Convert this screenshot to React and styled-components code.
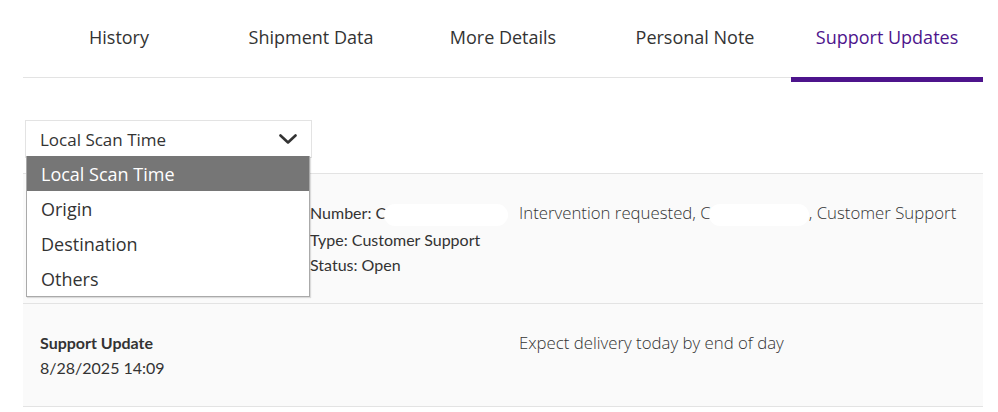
import styled, { createGlobalStyle } from 'styled-components'

const GlobalStyle = createGlobalStyle`
  body {
    margin: 0;
    background: #fff;
    font-family: 'Open Sans', 'Noto Sans', sans-serif;
    color: #333;
  }
`

const Page = styled.div`
  width: 960px;
  padding: 0 15px 0 23px;
`

const TabBar = styled.div`
  display: grid;
  grid-template-columns: repeat(5, 192px);
  border-bottom: 1px solid #e3e3e3;
`

const Tab = styled.div`
  position: relative;
  height: 77px;
  display: flex;
  align-items: center;
  justify-content: center;
  padding-bottom: 3px;
  box-sizing: border-box;
  font-size: 18px;
  color: ${p => (p.$active ? '#4d148c' : '#333')};
  &::after {
    content: '';
    display: ${p => (p.$active ? 'block' : 'none')};
    position: absolute;
    left: 0;
    right: 0;
    bottom: -5px;
    height: 5px;
    background: #4d148c;
  }
`

const Filter = styled.div`
  position: relative;
  width: 287px;
  margin: 42px 0 0 2px;
`

const SelectBox = styled.div`
  height: 36px;
  border: 1px solid #e3e3e3;
  display: flex;
  align-items: center;
  justify-content: space-between;
  padding: 0 14px 0 14px;
  font-size: 17px;
  color: #333;
`

const Menu = styled.ul`
  position: absolute;
  top: 36px;
  left: 1px;
  width: 282px;
  margin: 0;
  padding: 0;
  list-style: none;
  background: #fff;
  border: 1px solid #aaa;
  border-top: none;
  box-shadow: 1px 1px 1px rgba(0, 0, 0, 0.12);
  z-index: 2;
`

const Option = styled.li`
  height: 35px;
  display: flex;
  align-items: center;
  padding-left: 14px;
  font-size: 18px;
  color: ${p => (p.$selected ? '#fff' : '#333')};
  background: ${p => (p.$selected ? '#767676' : '#fff')};
`

const Table = styled.div`
  margin-top: 15px;
  border-top: 1px solid #e3e3e3;
`

const Row = styled.div`
  display: grid;
  grid-template-columns: 270px 209px 1fr;
  padding: 27px 17px 0 17px;
  height: ${p => p.$h}px;
  box-sizing: border-box;
  background: #fafafa;
  border-bottom: 1px solid #e3e3e3;
`

const Cell = styled.div`
  display: flex;
  flex-direction: column;
  gap: 2px;
  font-family: 'Lato', 'Open Sans', sans-serif;
  font-size: 16px;
  line-height: 23px;
  color: #333;
`

const Title = styled.span`
  font-weight: 700;
`

const Message = styled.div`
  font-size: 16.8px;
  font-weight: 300;
  line-height: 24px;
  color: #333;
`

const Redact = styled.span`
  display: inline-block;
  width: ${p => p.$w}px;
  height: 22px;
  border-radius: 11px;
  background: #fff;
  vertical-align: middle;
  margin-left: -2px;
`

const Chevron = () => (
  <svg width="18" height="10" viewBox="0 0 18 10" fill="none">
    <path d="M1.5 1.5 L9 8.5 L16.5 1.5" stroke="#333" strokeWidth="2.6" strokeLinecap="round" strokeLinejoin="round" />
  </svg>
)

const tabs = ['History', 'Shipment Data', 'More Details', 'Personal Note', 'Support Updates']
const options = ['Local Scan Time', 'Origin', 'Destination', 'Others']

export default function App() {
  return (
    <>
      <GlobalStyle />
      <Page>
        <TabBar>
          {tabs.map(t => (
            <Tab key={t} $active={t === 'Support Updates'}>{t}</Tab>
          ))}
        </TabBar>
        <Filter>
          <SelectBox>
            <span>Local Scan Time</span>
            <Chevron />
          </SelectBox>
          <Menu>
            {options.map((o, i) => (
              <Option key={o} $selected={i === 0}>{o}</Option>
            ))}
          </Menu>
        </Filter>
        <Table>
          <Row $h={130}>
            <Cell>
              <Title>Support Update</Title>
              <span>8/28/2025 14:09</span>
            </Cell>
            <Cell>
              <span>Number: C<Redact $w={124} /></span>
              <span>Type: Customer Support</span>
              <span>Status: Open</span>
            </Cell>
            <Message>
              Intervention requested, C<Redact $w={100} />, Customer Support
            </Message>
          </Row>
          <Row $h={103}>
            <Cell>
              <Title>Support Update</Title>
              <span>8/28/2025 14:09</span>
            </Cell>
            <Cell />
            <Message>Expect delivery today by end of day</Message>
          </Row>
        </Table>
      </Page>
    </>
  )
}
